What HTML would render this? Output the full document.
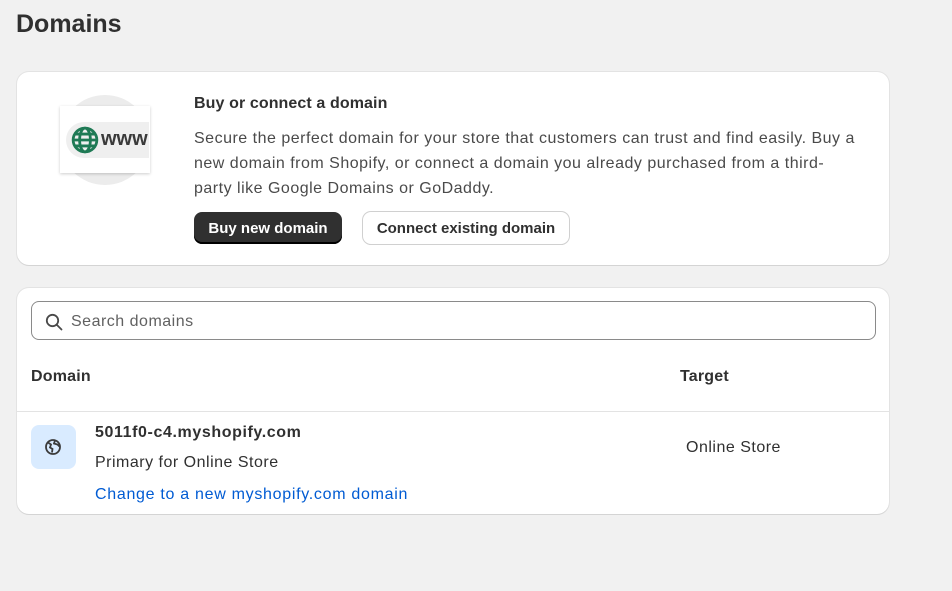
<!DOCTYPE html>
<html><head><style>
body{margin:0;width:952px;height:591px;background:#f1f1f1;font-family:"Liberation Sans",sans-serif;color:#303030;position:relative;overflow:hidden}
h1{position:absolute;left:16px;top:10px;margin:0;font-size:25px;font-weight:700;color:#303030}
.card{position:absolute;left:17px;width:872px;background:#fff;border-radius:12px;box-shadow:0 1px 0 #d4d4d4,0 0 0 1px #e3e3e3}
.t{position:absolute;white-space:nowrap;letter-spacing:.5px}
.btn{position:absolute;height:32px;border-radius:8px;font-size:15px;font-weight:700;display:flex;align-items:center;justify-content:center}
</style></head><body>
<h1>Domains</h1>
<div class="card" style="top:72px;height:193px">
  <div style="position:absolute;left:43px;top:23px;width:90px;height:90px;border-radius:50%;background:#ececec"></div>
  <div style="position:absolute;left:43px;top:34px;width:90px;height:67px;background:#fff;box-shadow:0 1px 3px rgba(0,0,0,.2)"></div>
  <div style="position:absolute;left:49px;top:50px;width:83px;height:36px;border-radius:18px 0 0 18px;background:#efefef"></div>
  <svg style="position:absolute;left:54px;top:54px" width="28" height="28" viewBox="0 0 26 26" fill="none" stroke="#1f7a55" stroke-width="2.6"><circle cx="13" cy="13" r="11"/><ellipse cx="13" cy="13" rx="5" ry="11"/><path d="M2 13h22M4 7.5h18M4 18.5h18"/></svg>
  <div class="t" style="left:84px;top:56px;font-size:20px;font-weight:700;color:#3a3a3a;letter-spacing:0">www</div>
  <div class="t" style="left:177px;top:23px;font-size:16px;font-weight:700;letter-spacing:.1px">Buy or connect a domain</div>
  <div style="position:absolute;left:177px;top:54px;width:690px;font-size:16px;line-height:25px;color:#4a4a4a;letter-spacing:.5px">Secure the perfect domain for your store that customers can trust and find easily. Buy a<br>new domain from Shopify, or connect a domain you already purchased from a third-<br>party like Google Domains or GoDaddy.</div>
  <div class="btn" style="left:177px;top:140px;width:148px;background:#303030;color:#fff;box-shadow:inset 0 -2px 0 #000">Buy new domain</div>
  <div class="btn" style="left:346px;top:140px;width:206px;background:#fff;color:#303030;box-shadow:0 0 0 1px #d0d0d0,0 1px 0 #bbb">Connect existing domain</div>
</div>
<div class="card" style="top:288px;height:226px">
  <div style="position:absolute;left:14px;top:13px;width:843px;height:37px;border:1px solid #8a8a8a;border-radius:8px"></div>
  <svg style="position:absolute;left:28px;top:25px" width="18" height="18" viewBox="0 0 18 18" fill="none" stroke="#4a4a4a" stroke-width="1.8"><circle cx="7.5" cy="7.5" r="5.7"/><path d="M12 12l4.5 4.5" stroke-linecap="round"/></svg>
  <div class="t" style="left:54px;top:25px;font-size:16px;color:#616161">Search domains</div>
  <div class="t" style="left:14px;top:80px;font-size:16px;font-weight:700;letter-spacing:.2px">Domain</div>
  <div class="t" style="left:663px;top:80px;font-size:16px;font-weight:700;letter-spacing:.2px">Target</div>
  <div style="position:absolute;left:0;right:0;top:123px;border-top:1px solid #e3e3e3"></div>
  <div style="position:absolute;left:14px;top:137px;width:45px;height:44px;border-radius:8px;background:#d9ebff"></div>
  <svg style="position:absolute;left:27px;top:150px" width="18" height="18" viewBox="0 0 18 18" fill="none" stroke="#3a3a3a" stroke-width="1.8"><circle cx="9" cy="9" r="7"/><path d="M4 4.5l3 2-1 3 2.5 1.5-.5 3.5M11 2.5l-1 3 3.5 1 2 2"/></svg>
  <div class="t" style="left:78px;top:136px;font-size:16px;font-weight:700;letter-spacing:.6px">5011f0-c4.myshopify.com</div>
  <div class="t" style="left:78px;top:166px;font-size:16px">Primary for Online Store</div>
  <div class="t" style="left:78px;top:198px;font-size:16px;color:#005bd3;letter-spacing:.7px">Change to a new myshopify.com domain</div>
  <div class="t" style="left:669px;top:151px;font-size:16px">Online Store</div>
</div>
</body></html>
